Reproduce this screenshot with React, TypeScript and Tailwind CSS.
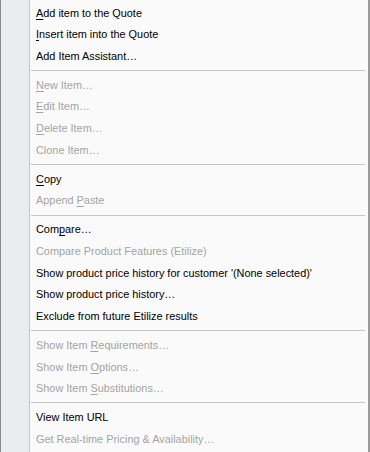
type Item = { label: string; disabled?: boolean; key?: number } | 'sep'

const ITEMS: Item[] = [
  { label: 'Add item to the Quote', key: 0 },
  { label: 'Insert item into the Quote', key: 0 },
  { label: 'Add Item Assistant…' },
  'sep',
  { label: 'New Item…', disabled: true, key: 0 },
  { label: 'Edit Item…', disabled: true, key: 0 },
  { label: 'Delete Item…', disabled: true, key: 0 },
  { label: 'Clone Item…', disabled: true },
  'sep',
  { label: 'Copy', key: 0 },
  { label: 'Append Paste', disabled: true, key: 7 },
  'sep',
  { label: 'Compare…', key: 3 },
  { label: 'Compare Product Features (Etilize)', disabled: true },
  { label: "Show product price history for customer '(None selected)'" },
  { label: 'Show product price history…' },
  { label: 'Exclude from future Etilize results' },
  'sep',
  { label: 'Show Item Requirements…', disabled: true, key: 10 },
  { label: 'Show Item Options…', disabled: true, key: 10 },
  { label: 'Show Item Substitutions…', disabled: true, key: 10 },
  'sep',
  { label: 'View Item URL' },
  { label: 'Get Real-time Pricing & Availability…', disabled: true },
]

function Label({ label, mnemonic }: { label: string; mnemonic?: number }) {
  if (mnemonic === undefined) return <span>{label}</span>
  return (
    <span>
      {label.slice(0, mnemonic)}
      <span className="underline underline-offset-[2px]">{label[mnemonic]}</span>
      {label.slice(mnemonic + 1)}
    </span>
  )
}

export default function App() {
  return (
    <div className="w-[370px] h-[452px] overflow-hidden bg-white">
      <div className="relative h-full w-[370px] border-l border-[#8a8a8a] border-r-2 border-r-[#9a9a9a] bg-[#fafafa] pt-[2px] font-['Liberation_Sans',sans-serif] text-[10.9px]">
        <div className="absolute left-0 top-0 bottom-0 w-[29px] bg-[#e9eded] border-r border-[#c8c8c8]" />
        <div className="relative">
          {ITEMS.map((item, i) =>
            item === 'sep' ? (
              <div key={i} className="h-[7.5px] flex items-center pl-[30px] pr-[3px]">
                <div className="h-px w-full bg-[#c5c5c5]" />
              </div>
            ) : (
              <div
                key={i}
                className={`h-[21.6px] flex items-center pl-[35px] whitespace-nowrap ${
                  item.disabled ? 'text-[#a4a4a4]' : 'text-black'
                }`}
              >
                <Label label={item.label} mnemonic={item.key} />
              </div>
            ),
          )}
        </div>
      </div>
    </div>
  )
}
